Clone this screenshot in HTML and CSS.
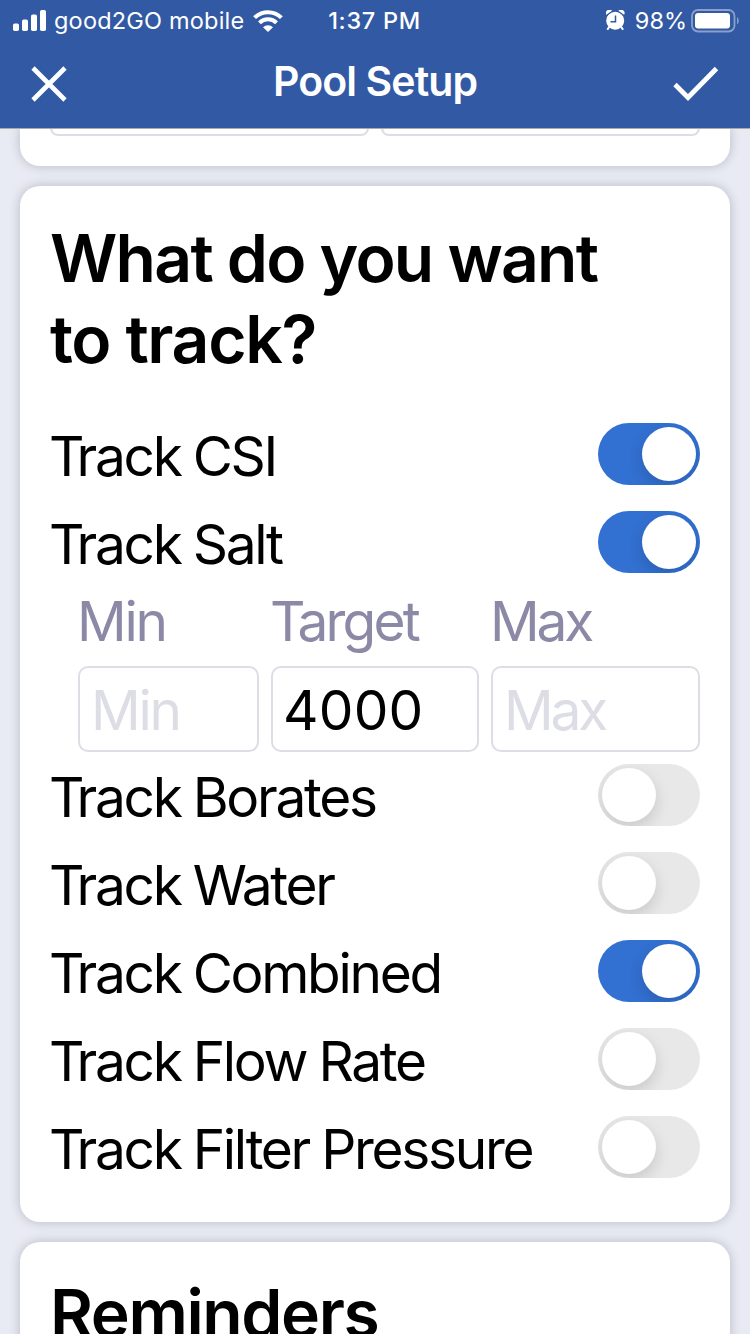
FILE: index.html
```html
<!DOCTYPE html>
<html lang="en">
<head>
<meta charset="utf-8">
<title>Pool Setup</title>
<link rel="stylesheet" href="styles.css">
</head>
<body>
<header class="header">
  <div class="status">
    <div class="status-left">
      <svg class="signal" width="34" height="22" viewBox="0 0 34 22" fill="#fff">
        <rect x="0" y="13.5" width="6" height="7.5" rx="1.7"/><rect x="9" y="9.5" width="6" height="11.5" rx="1.7"/><rect x="18" y="4.5" width="6" height="16.5" rx="1.7"/><rect x="27" y="0" width="6" height="21" rx="1.7"/>
      </svg>
      <span class="carrier">good2GO mobile</span>
      <svg class="wifi" width="30" height="22" viewBox="0 0 30 22">
        <g fill="none" stroke="#fff" stroke-width="4"><path d="M1.6 7.7A19 19 0 0 1 28.4 7.7"/><path d="M6.5 12.8A12 12 0 0 1 23.500 12.8"/></g>
        <path fill="#fff" d="M15 22 10 17.2A7.200 7.200 0 0 1 20 17.200Z"/>
      </svg>
    </div>
    <span class="time">1:37 PM</span>
    <div class="status-right">
      <svg class="alarm" width="20" height="21" viewBox="0 0 20 21">
        <path d="m3.500 16.500-2.200 3.300M14.900 16.500l2.200 3.300" stroke="#fff" stroke-width="2"/>
        <circle cx="9.200" cy="10.700" r="9" fill="#fff"/>
        <path d="M.6 5.600 5.900 1.300M17.800 5.600 12.500 1.300" stroke="#3259a4" stroke-width="1.100"/>
        <path d="M.3 4.800A3.500 3.500 0 0 1 6 .8ZM18.100 4.800A3.500 3.500 0 0 0 12.400.8Z" fill="#fff"/>
        <path d="M9.500 5.500v6.200H4.500" fill="none" stroke="#3259a4" stroke-width="1.500"/>
      </svg>
      <span class="percent">98%</span>
      <svg class="battery" width="49" height="24" viewBox="0 0 49 24">
        <rect x="1" y="1" width="42.500" height="21.500" rx="6" fill="none" stroke="#8b9fcb" stroke-width="1.800"/>
        <rect x="4" y="4" width="35" height="15.500" rx="3.200" fill="#fff"/>
        <path d="M46 8v7.500q1.800-1 1.800-3.750T46 8Z" fill="#8b9fcb"/>
      </svg>
    </div>
  </div>
  <div class="nav">
    <svg width="36" height="36" viewBox="0 0 36 36"><path d="m2 2 32 32M34 2 2 34" stroke="#fff" stroke-width="4.600"/></svg>
    <h1 class="title">Pool Setup</h1>
    <svg width="46" height="36" viewBox="0 0 46 36"><path d="m2 18.500 13 13L43.500 2.500" fill="none" stroke="#fff" stroke-width="4.800"/></svg>
  </div>
</header>
<main class="page">
  <section class="card card-prev">
    <div class="stub"></div><div class="stub"></div>
  </section>
  <section class="card">
    <h2 class="heading"><span class="line-first">What do you want</span><br>to track?</h2>
    <div class="row"><span class="label"><span class="cap">T</span>rack CSI</span><span class="toggle on"></span></div>
    <div class="row"><span class="label"><span class="cap">T</span>rack Salt</span><span class="toggle on"></span></div>
    <div class="range">
      <label class="field"><span class="field-label min">Min</span><span class="input empty min">Min</span></label>
      <label class="field"><span class="field-label target"><span class="cap">T</span>arget</span><span class="input number">4000</span></label>
      <label class="field"><span class="field-label max">Max</span><span class="input empty max">Max</span></label>
    </div>
    <div class="row"><span class="label"><span class="cap">T</span>rack Borates</span><span class="toggle"></span></div>
    <div class="row"><span class="label"><span class="cap">T</span>rack Water</span><span class="toggle"></span></div>
    <div class="row"><span class="label"><span class="cap">T</span>rack Combined</span><span class="toggle on"></span></div>
    <div class="row"><span class="label"><span class="cap">T</span>rack Flow Rate</span><span class="toggle"></span></div>
    <div class="row"><span class="label"><span class="cap">T</span>rack Filter Pressure</span><span class="toggle"></span></div>
  </section>
  <section class="card card-next">
    <h2 class="heading reminders">Reminders</h2>
  </section>
</main>
</body>
</html>
```
FILE: styles.css
```css
* { box-sizing: border-box; }
body {
  margin: 0;
  height: 1334px;
  overflow: hidden;
  display: flex;
  flex-direction: column;
  background: #e8eaf4;
  color: #000;
  font-family: Inter, "Liberation Sans", sans-serif;
}
svg { display: block; flex: none; }
.header {
  flex: none;
  height: 128px;
  background: #3259a4;
  color: #fff;
  box-shadow: 0 1px 0 #aaa;
  z-index: 1;
}
.status {
  height: 40px;
  display: grid;
  grid-template-columns: 1fr auto 1fr;
  align-items: center;
  padding: 0 10px 0 13px;
  font-size: 23.5px;
  line-height: 40px;
}
.status-left, .status-right { display: flex; align-items: center; }
.status-right { justify-content: flex-end; }
.carrier { margin: 1px 0 0 7px; letter-spacing: .2px; }
.wifi { margin-left: 9px; }
.time { font-weight: 500; letter-spacing: .7px; padding: 1px 4px 0 0; }
.percent { margin: 1px 4px 0 9px; }
.nav {
  height: 88px;
  display: flex;
  justify-content: space-between;
  align-items: center;
  padding: 0 31px;
}
.title { margin: -7px 0 0 10px; font-size: 41px; font-weight: 600; line-height: 50px; letter-spacing: -.9px; }
.page { flex: 1; min-height: 0; padding: 0 20px; display: flex; flex-direction: column; gap: 20px; }
.card {
  flex: none;
  padding: 32px 30px 31px;
  background: #fff;
  border-radius: 20px;
  box-shadow: 0 0 12px rgba(0, 0, 0, .2);
}
.card-prev {
  height: 38px;
  padding: 0 30px;
  display: flex;
  gap: 12px;
  border-radius: 0 0 20px 20px;
}
.card-next { padding-top: 31px; }
.stub { flex: 1; height: 8px; border: 2px solid #dddde5; border-top: 0; border-radius: 0 0 10px 10px; }
.heading {
  margin: 0 0 30px;
  font-size: 66px;
  font-weight: 600;
  line-height: 81px;
  letter-spacing: -1.35px;
  white-space: nowrap;
}
.line-first { letter-spacing: -1.75px; }
.reminders { letter-spacing: -1.4px; }
.row { height: 88px; display: flex; align-items: center; justify-content: space-between; }
.label {
  padding-top: 4px;
  margin-left: -1px;
  font-size: 55px;
  line-height: 66px;
  letter-spacing: -2.3px;
  word-spacing: -1px;
  white-space: nowrap;
}
.cap { letter-spacing: -8px; }
.toggle {
  flex: none;
  width: 102px;
  height: 62px;
  padding: 4px;
  display: flex;
  border-radius: 31px;
  background: #e8e8e8;
  overflow: hidden;
}
.toggle::before {
  content: "";
  width: 54px;
  height: 54px;
  border-radius: 50%;
  background: #fff;
  box-shadow: 0 6px 16px rgba(0, 0, 0, .14);
}
.toggle.on { background: #3270d1; justify-content: flex-end; }
.range {
  height: 165px;
  padding-left: 28px;
  display: grid;
  grid-template-columns: 181px 208px 209px;
  gap: 12px;
}
.field { font-size: 55px; }
.field-label { display: block; height: 80px; margin-left: -1px; line-height: 71px; color: #8c89a6; }
.input {
  display: block;
  height: 86px;
  padding-left: 11px;
  border: 2px solid #dddde5;
  border-radius: 10px;
  line-height: 84px;
}
.min { letter-spacing: -2.2px; }
.target { letter-spacing: -2.8px; }
.max { letter-spacing: -3.2px; }
.number { padding-left: 10px; letter-spacing: .2px; }
.empty { color: #dddde5; }
```
